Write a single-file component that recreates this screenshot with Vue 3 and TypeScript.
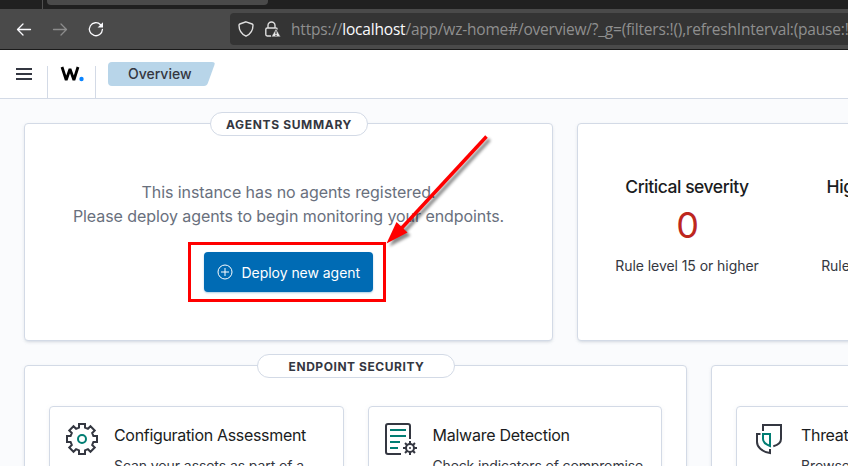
<script setup lang="ts">
interface Module {
  icon: 'gear' | 'report' | 'shield'
  title: string
  text: string
}

const endpoint: Module[] = [
  { icon: 'gear', title: 'Configuration Assessment', text: 'Scan your assets as part of a' },
  { icon: 'report', title: 'Malware Detection', text: 'Check indicators of compromise' },
]
const threat: Module[] = [{ icon: 'shield', title: 'Threat Hunting', text: 'Browse through your' }]

const severities = [
  { name: 'Critical severity', count: 0, rule: 'Rule level 15 or higher', tone: 'critical' },
  { name: 'High severity', count: 0, rule: 'Rule level 12 to 14', tone: 'high' },
]

/** Outline of an eight-toothed cog centred on (16, 16). */
function cogOutline(outer: number, inner: number, half: number): string {
  const points: string[] = []
  for (let i = 0; i < 8; i++) {
    const a = (i * Math.PI) / 4
    const tooth = [[-half, -inner], [-half, -outer], [half, -outer], [half, -inner]]
    for (const [x, y] of tooth) {
      const px = 16 + x * Math.cos(a) - y * Math.sin(a)
      const py = 16 + x * Math.sin(a) + y * Math.cos(a)
      points.push(`${px.toFixed(2)} ${py.toFixed(2)}`)
    }
  }
  return `M${points.join('L')}Z`
}
const cog = cogOutline(15, 11.4, 3)
const spokes = [0, 45, 90, 135, 180, 225, 270, 315]
</script>

<template>
  <div class="window">
    <div class="tabstrip"><span class="edge"></span><span class="tab"></span></div>
    <div class="toolbar">
      <svg class="nav" viewBox="0 0 16 16"><path d="M14.500 8.500H1.500M7 3 1.500 8.500 7 14" /></svg>
      <svg class="nav off" viewBox="0 0 16 16"><path d="M1.500 8.500h13M9 3l5.500 5.500L9 14" /></svg>
      <svg class="nav" viewBox="0 0 16 16">
        <path d="M12.600 3.700A6.500 6.500 0 1 0 14.400 8.500" /><path class="solid" d="M15 1.200v5.300H9.600z" />
      </svg>
      <div class="urlbar">
        <svg class="shield" viewBox="0 0 16 16"><path d="M8 .8 14.2 3c.8.3.8.7.8 1.2 0 5.500-2 8.600-7 11-5-2.400-7-5.500-7-11C1 3.700 1 3.300 1.800 3z" /></svg>
        <svg class="lock" viewBox="0 0 16 16">
          <path d="M3 7V4.500a3.500 3.500 0 0 1 7 0V7M6 15H2.200A1.400 1.400 0 0 1 .8 13.600V8.400C.8 7.600 1.400 7 2.200 7h8.600c.8 0 1.400.6 1.400 1.400" />
          <path class="solid" d="M11 7.800 15.600 15.800H6.400z" /><path class="mark" d="M11 10.300v2.700M11 13.800v1.200" />
        </svg>
        <span class="url">https://<b>localhost</b>/app/wz-home#/overview/?_g=(filters:!(),refreshInterval:(pause:!</span>
      </div>
    </div>

    <header class="appbar">
      <button class="menu" aria-label="Menu"><i></i><i></i><i></i></button>
      <div class="logo">
        <svg viewBox="0 0 24 16"><path d="M2 1 6.200 14 10 3 13.900 14 18 1" /><circle cx="21.500" cy="13" r="2.200" /></svg>
      </div>
      <div class="crumb"><svg viewBox="0 0 107 24"><path d="M4 0h100q3.500 0 2.500 2.800l-6.500 18q-1.200 3.200-4 3.200H4q-4 0-4-4V4q0-4 4-4z" /></svg><span>Overview</span></div>
    </header>

    <main>
      <div class="row summary">
        <section class="panel agents">
          <h2 class="pill"><span>AGENTS SUMMARY</span></h2>
          <p class="empty">This instance has no agents registered.<br />Please deploy agents to begin monitoring your endpoints.</p>
          <div class="highlight">
            <button class="deploy">
              <svg viewBox="0 0 16 16"><circle cx="8" cy="8" r="7" /><path d="M8 4v8M4 8h8" /></svg>
              <span>Deploy new agent</span>
            </button>
          </div>
          <svg class="arrow" viewBox="0 0 120 125">
            <path class="shaft" d="M106.500 16.500 19 111" /><path class="head" d="M6.500 123.500 16.500 102 27.500 112.500z" />
          </svg>
        </section>
        <section class="panel alerts">
          <div v-for="s in severities" :key="s.name" class="stat" :class="s.tone">
            <h3>{{ s.name }}</h3>
            <strong>{{ s.count }}</strong>
            <p>{{ s.rule }}</p>
          </div>
        </section>
      </div>

      <div class="row modules">
        <section v-for="(group, g) in [endpoint, threat]" :key="g" class="panel group">
          <h2 v-if="g === 0" class="pill wide"><span>ENDPOINT SECURITY</span></h2>
          <article v-for="m in group" :key="m.title" class="card">
            <svg v-if="m.icon === 'gear'" class="icon" viewBox="0 0 32 32">
              <path :d="cog" /><circle class="teal" cx="16" cy="16" r="4" />
            </svg>
            <svg v-else-if="m.icon === 'report'" class="icon" viewBox="0 0 32 32">
              <path d="M25 16V3a2 2 0 0 0-2-2H3a2 2 0 0 0-2 2v26a2 2 0 0 0 2 2h13" />
              <path class="teal" d="M5 7h16M5 13h16M5 19h10M5 25h8" />
              <circle cx="25" cy="25" r="4" /><circle class="dot" cx="25" cy="25" r="1" />
              <path v-for="a in spokes" :key="a" d="M25 21v-3" :transform="`rotate(${a} 25 25)`" />
            </svg>
            <svg v-else class="icon" viewBox="0 0 32 32">
              <path d="M10 8V2h18v14c0 3.500-3 6-7.700 7.200M7.500 11H4v8c0 5 4.500 9.500 13 11v-4" />
              <path class="teal" d="M10 11h7v12c-4-1.500-7-3.500-7-7z" />
            </svg>
            <div class="copy" :class="m.icon"><h3>{{ m.title }}</h3><p>{{ m.text }}</p></div>
          </article>
        </section>
      </div>
    </main>
  </div>
</template>

<style>
body { background: #fafbfd; overflow: hidden; }
</style>

<style scoped>
* { box-sizing: border-box; }
h2, h3, p { margin: 0; font-weight: 400; }
button { border: 0; padding: 0; font: inherit; }
svg { display: block; fill: none; overflow: visible; flex: none; }
.window { width: 848px; height: 466px; overflow: hidden; font-family: Inter, "Liberation Sans", sans-serif; color: #343741; }
.tabstrip { height: 9px; background: #202020; display: flex; }
.edge { width: 1px; height: 9px; margin-left: 42px; background: #505050; }
.tab { width: 221px; height: 5px; margin-left: 4px; background: #4a4a4a; border-radius: 0 0 4px 4px; }
.toolbar { height: 41px; background: #4a4a4a; border-bottom: 1px solid #1a1a1a; display: flex; align-items: center; padding-left: 16px; gap: 20px; }
.nav { width: 16px; height: 16px; stroke: #fbfbfe; stroke-width: 1.3; stroke-linecap: round; stroke-linejoin: round; }
.nav.off { stroke: #8c8c8c; }
.solid { fill: #fbfbfe; stroke: none; }
.urlbar { height: 32px; margin-left: 106px; flex: 1; min-width: 0; background: #343434; border-radius: 4px 0 0 4px; display: flex; align-items: center; padding-left: 8px; white-space: nowrap; overflow: hidden; }
.urlbar svg { width: 16px; height: 16px; stroke: #dedede; stroke-width: 1.4; }
.urlbar .lock { margin-left: 11px; }
.urlbar .solid { stroke: #343434; stroke-width: .5; fill: #e8e8e8; }
.urlbar .mark { stroke: #343434; stroke-width: 1.2; }
.url { margin-left: 10px; margin-top: -1px; font: 15.5px/20px "Open Sans", "Noto Sans", sans-serif; color: #8f8f8f; letter-spacing: -.2px; }
.url b { font-weight: 400; color: #fbfbfe; }
.appbar { height: 49px; background: #fff; border-bottom: 1px solid #d3dae6; display: flex; align-items: center; }
.menu { width: 47px; padding: 0 0 0 16px; background: none; display: grid; gap: 3px; }
.menu i { width: 16px; height: 2px; background: #343741; }
.logo { width: 49px; height: 32px; margin-top: 16px; border: solid #d3dae6; border-width: 0 1px; padding-left: 12px; }
.logo svg { width: 24px; height: 16px; }
.logo path { stroke: #000; stroke-width: 2.8; stroke-linejoin: bevel; }
.logo circle { fill: #0a84ff; }
.crumb { width: 107px; height: 24px; margin-left: 12px; display: grid; }
.crumb > * { grid-area: 1 / 1; }
.crumb svg { width: 107px; height: 24px; fill: #b8d5e9; }
.crumb span { z-index: 1; padding-left: 20px; font-size: 14px; font-weight: 500; line-height: 24px; }
main { padding: 24px 0 0 24px; background: #fafbfd; }
.row { display: flex; gap: 24px; }
.panel { flex: none; background: #fff; border: 1px solid #d3dae6; border-radius: 4px; box-shadow: 0 2px 3px -1px #98a2b34d, 0 1px 5px -2px #98a2b34d; position: relative; }
.summary .panel { height: 218px; }
.agents { width: 529px; display: flex; flex-direction: column; align-items: center; }
.pill { height: 24px; width: 158px; margin-top: -12px; padding-left: 1px; border: 1px solid #d3dae6; border-radius: 12px; background: #fff; font-size: 12px; line-height: 23px; font-weight: 700; text-align: center; letter-spacing: .65px; white-space: nowrap; }
.empty { margin-top: 44px; font-size: 16px; line-height: 24px; color: #69707d; text-align: center; white-space: nowrap; letter-spacing: -.07px; }
.highlight { width: 198px; height: 60px; margin-top: 14px; border: 3px solid #f00; padding: 7px 0 0 13px; margin-left: -3px; }
.deploy { width: 169px; height: 40px; border-radius: 4px; background: #006bb4; color: #fff; display: flex; align-items: center; padding-left: 12.5px; gap: 9px; font-size: 14px; white-space: nowrap; box-shadow: 0 1px 2px #006bb455; letter-spacing: -.04px; }
.deploy svg { width: 16px; height: 16px; stroke: #fff; stroke-width: 1; }
.arrow { position: absolute; left: 355px; top: -4px; width: 120px; height: 125px; filter: drop-shadow(3px 3px 1.500px #0007); }
.shaft { stroke: #f00; stroke-width: 3.500; }
.head { fill: #f00; }
.alerts { width: 700px; display: flex; padding: 51px 0 0 13px; }
.stat { width: 192px; flex: none; text-align: center; white-space: nowrap; }
.stat h3 { font-size: 17.5px; line-height: 24px; font-weight: 500; color: #1a1c21; letter-spacing: -.45px; }
.stat strong { display: block; margin-top: 4px; font-size: 36px; line-height: 44px; font-weight: 400; color: #bd271e; letter-spacing: -1px; }
.stat p { margin-top: 8px; font-size: 14px; line-height: 21px; letter-spacing: -.06px; }
.modules { margin-top: 24px; }
.group { width: 663px; height: 220px; display: flex; gap: 24px; padding: 40px 24px 0; }
.pill.wide { position: absolute; top: 0; left: 232px; width: 198px; letter-spacing: .55px; }
.card { width: 294.5px; height: 150px; flex: none; border: 1px solid #d3dae6; border-radius: 4px; padding: 16px; display: flex; gap: 16px; box-shadow: 0 1px 4px #98a2b322; }
.icon { width: 32px; height: 32px; stroke: #343741; stroke-width: 2; }
.icon .teal { stroke: #017d73; }
.icon .dot { fill: #343741; stroke: none; }
.copy { white-space: nowrap; }
.copy h3 { font-size: 16px; line-height: 24px; color: #1a1c21; letter-spacing: -.32px; }
.copy p { margin-top: 8px; font-size: 14px; line-height: 21px; letter-spacing: -.08px; }
.copy.report h3 { letter-spacing: -.25px; }
.copy.report p { letter-spacing: -.14px; }
</style>
